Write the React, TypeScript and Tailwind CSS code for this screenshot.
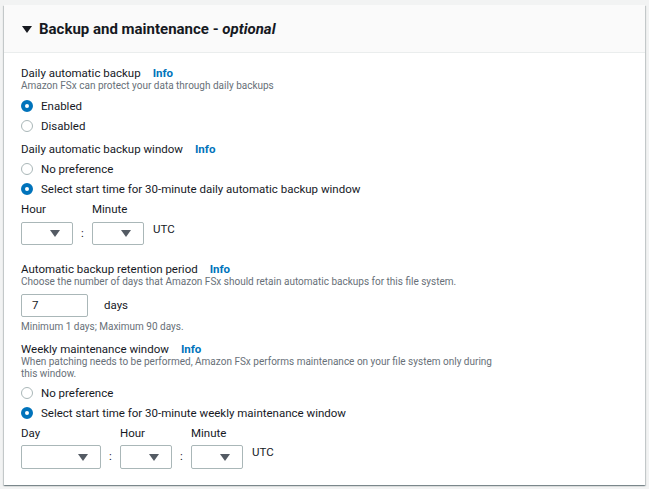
import React from "react";

const font = { fontFamily: 'Roboto, "Open Sans", Arial, sans-serif' };

function Radio({ checked, label }: { checked?: boolean; label: string }) {
  return (
    <div className="flex h-[20px] items-center">
      {checked ? (
        <span className="box-border h-[12px] w-[12px] rounded-full border-[4px] border-[#0073bb] bg-white" />
      ) : (
        <span className="box-border h-[12px] w-[12px] rounded-full border border-[#aab7b8] bg-white" />
      )}
      <span className="ml-[8px] text-[11.5px] leading-[14px] text-[#16191f]">{label}</span>
    </div>
  );
}

function Label({ text }: { text: string }) {
  return (
    <div className="flex h-[14px] items-center text-[11.5px] leading-[14px] text-[#16191f]">
      <span>{text}</span>
      <span className="ml-[12px] font-bold text-[#0073bb]">Info</span>
    </div>
  );
}

function Select({ w, h = 23 }: { w: number; h?: number }) {
  return (
    <div
      className="box-border flex items-center justify-end rounded-[2px] border border-[#aab7b8] bg-white pr-[12px]"
      style={{ width: w, height: h }}
    >
      <svg width="10" height="7" viewBox="0 0 10 7">
        <path d="M0 0 L10 0 L5 7 Z" fill="#545b64" />
      </svg>
    </div>
  );
}

function Colon() {
  return <span className="w-[19px] pt-[4px] text-center text-[11.5px] leading-[14px] text-[#16191f]">:</span>;
}

function Utc() {
  return <span className="ml-[9px] text-[11.5px] leading-[14px] text-[#16191f]">UTC</span>;
}

function FieldLabel({ text }: { text: string }) {
  return <span className="h-[14px] text-[11.5px] leading-[14px] text-[#16191f]">{text}</span>;
}

export default function App() {
  return (
    <div className="min-h-[489px] w-[649px] bg-[#f2f3f3] pl-[4px] pt-[5px]" style={font}>
      <div className="w-[641px] bg-white shadow-[0_1px_1px_0_rgba(0,28,36,0.3),1px_1px_1px_0_rgba(0,28,36,0.15),-1px_1px_1px_0_rgba(0,28,36,0.15)]">
        <div className="flex h-[48px] items-center border-b border-[#eaeded] bg-[#fafafa] pl-[18px] pt-[1px]">
          <svg width="10" height="7" viewBox="0 0 10 7">
            <path d="M0 0 L10 0 L5 7 Z" fill="#16191f" />
          </svg>
          <span className="ml-[7px] text-[15px] font-bold leading-[18px] text-[#16191f]">
            Backup and maintenance - <i>optional</i>
          </span>
        </div>
        <div className="flex flex-col px-[17px] pb-[16px] pt-[13px]">
          <Label text="Daily automatic backup" />
          <div className="text-[10px] leading-[12px] text-[#687078]">
            Amazon FSx can protect your data through daily backups
          </div>
          <div className="mt-[4px]">
            <Radio checked label="Enabled" />
            <Radio label="Disabled" />
          </div>
          <div className="mt-[6px]">
            <Label text="Daily automatic backup window" />
          </div>
          <div className="mt-[3px]">
            <Radio label="No preference" />
            <Radio checked label="Select start time for 30-minute daily automatic backup window" />
          </div>
          <div className="mt-[3px] flex items-start">
            <div className="flex flex-col">
              <FieldLabel text="Hour" />
              <div className="mt-[6px]"><Select w={52} /></div>
            </div>
            <div className="mt-[20px] flex"><Colon /></div>
            <div className="flex flex-col">
              <FieldLabel text="Minute" />
              <div className="mt-[6px]"><Select w={52} /></div>
            </div>
            <div className="mt-[20px] flex"><Utc /></div>
          </div>
          <div className="mt-[17px]">
            <Label text="Automatic backup retention period" />
          </div>
          <div className="text-[10px] leading-[12px] text-[#687078]">
            Choose the number of days that Amazon FSx should retain automatic backups for this file system.
          </div>
          <div className="mt-[6px] flex items-center">
            <div className="box-border flex h-[23px] w-[67px] items-center rounded-[2px] border border-[#aab7b8] pl-[10px] text-[11.5px] text-[#16191f]">
              7
            </div>
            <span className="ml-[16px] text-[11.5px] text-[#16191f]">days</span>
          </div>
          <div className="mt-[4px] text-[10px] leading-[12px] text-[#687078]">
            Minimum 1 days; Maximum 90 days.
          </div>
          <div className="mt-[9px]">
            <Label text="Weekly maintenance window" />
          </div>
          <div className="w-[480px] text-[10px] leading-[12px] text-[#687078]">
            When patching needs to be performed, Amazon FSx performs maintenance on your file system only during this window.
          </div>
          <div className="mt-[3px]">
            <Radio label="No preference" />
            <Radio checked label="Select start time for 30-minute weekly maintenance window" />
          </div>
          <div className="mt-[3px] flex items-start">
            <div className="flex flex-col">
              <FieldLabel text="Day" />
              <div className="mt-[5px]"><Select w={80} h={24} /></div>
            </div>
            <div className="mt-[19px] flex"><Colon /></div>
            <div className="flex flex-col">
              <FieldLabel text="Hour" />
              <div className="mt-[5px]"><Select w={52} h={24} /></div>
            </div>
            <div className="mt-[19px] flex"><Colon /></div>
            <div className="flex flex-col">
              <FieldLabel text="Minute" />
              <div className="mt-[5px]"><Select w={52} h={24} /></div>
            </div>
            <div className="mt-[19px] flex"><Utc /></div>
          </div>
        </div>
      </div>
    </div>
  );
}
